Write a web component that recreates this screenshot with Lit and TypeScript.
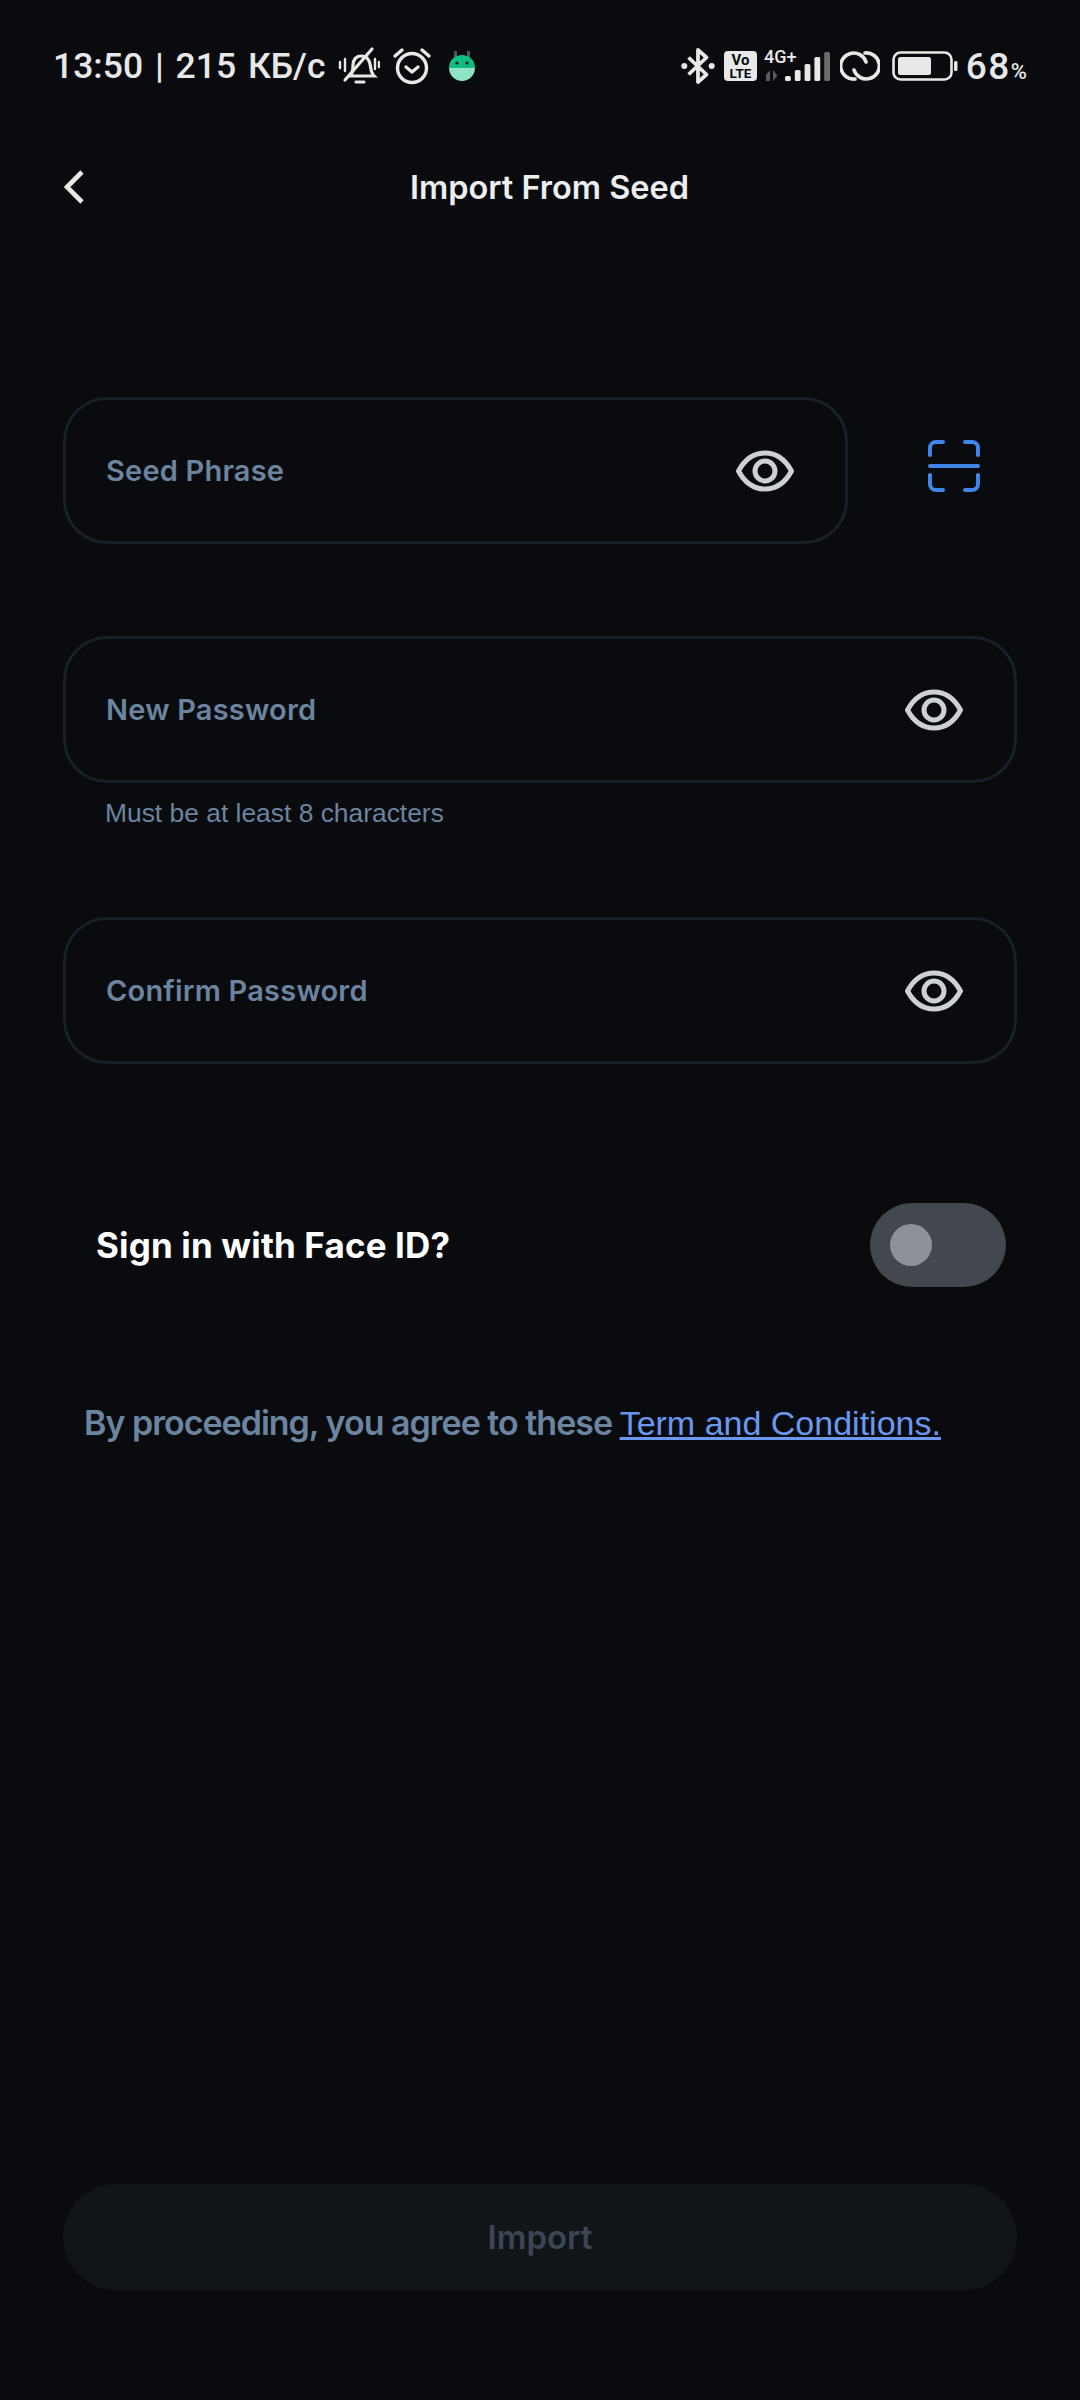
import { LitElement, html, css, svg } from "lit";
import { customElement } from "lit/decorators.js";

const eye = html`<svg class="eye" viewBox="0 0 58 42" fill="none" stroke="#cdd0d4" stroke-width="5">
  <path d="M2.5 21C9 9 18 3 29 3s20 6 26.5 18C49 33 40 39 29 39S9 33 2.5 21Z" stroke-linejoin="round" />
  <circle cx="29" cy="21" r="10" />
</svg>`;

const signalBars = [5, 11, 17, 24, 29].map(
  (h, i) => svg`<rect x=${21 + i * 9.8} y=${34 - h} width="5.8" height=${h} rx="1.6" fill=${i === 4 ? "#6a6c6e" : "#e8e8e8"} />`,
);

@customElement("app-root")
export class AppRoot extends LitElement {
  static styles = css`
    :host {
      display: block;
      width: 1080px;
      height: 2400px;
      background: #090b0e;
      font-family: "Inter", "Liberation Sans", sans-serif;
      overflow: hidden;
    }

    .page {
      display: flex;
      flex-direction: column;
      height: 2400px;
      box-sizing: border-box;
      padding-bottom: 110px;
    }

    .status {
      display: flex;
      align-items: center;
      justify-content: space-between;
      height: 132px;
      padding: 0 53px;
      box-sizing: border-box;
      color: #e8e8e8;
    }

    .status-side {
      display: flex;
      align-items: center;
    }

    .clock {
      font-family: "Roboto", sans-serif;
      font-size: 35.5px;
      font-weight: 500;
      word-spacing: 3px;
      white-space: pre;
      margin-right: 13px;
    }

    .battery-level {
      font-family: "Roboto", sans-serif;
      font-size: 37px;
      font-weight: 500;
      letter-spacing: 1.5px;
      margin-left: 8px;
    }

    .battery-level small {
      font-size: 22px;
      letter-spacing: 0;
    }

    .header {
      position: relative;
      display: flex;
      align-items: center;
      justify-content: center;
      height: 110px;
      padding-left: 19px;
    }

    .back {
      position: absolute;
      left: 62px;
      top: 38px;
    }

    .title {
      font-size: 32.5px;
      font-weight: 600;
      color: #eceef0;
    }

    .form {
      display: flex;
      flex-direction: column;
      padding: 155px 63px 0;
    }

    .row {
      display: flex;
      align-items: center;
    }

    .field {
      flex: 1;
      display: flex;
      align-items: center;
      justify-content: space-between;
      height: 147px;
      box-sizing: border-box;
      padding: 0 51px 0 40px;
      border: 3px solid #1a2027;
      border-radius: 44px;
    }

    .field-label {
      font-size: 29px;
      font-weight: 600;
      letter-spacing: 0.2px;
      color: #6b84a0;
    }

    .eye {
      width: 58px;
      height: 42px;
    }

    .scan {
      width: 56px;
      height: 56px;
      margin: -10px 35px 0 78px;
    }

    .gap-md {
      margin-top: 92px;
    }

    .hint {
      margin: 15px 0 0 42px;
      font-family: "Liberation Sans", sans-serif;
      font-size: 26.4px;
      color: #6b84a0;
    }

    .gap-hint {
      margin-top: 88px;
    }

    .face-row {
      display: flex;
      align-items: center;
      justify-content: space-between;
      margin: 139px 11px 0 33px;
    }

    .face-label {
      font-size: 35px;
      font-weight: 700;
      letter-spacing: 0.15px;
      color: #ffffff;
    }

    .switch {
      display: flex;
      align-items: center;
      width: 136px;
      height: 84px;
      box-sizing: border-box;
      padding-left: 20px;
      border-radius: 42px;
      background: #42484d;
    }

    .knob {
      width: 42px;
      height: 42px;
      border-radius: 50%;
      background: #8d9299;
    }

    .terms {
      margin: 115px 0 0 21px;
      font-size: 34px;
      font-weight: 600;
      letter-spacing: -1px;
      color: #6b84a0;
      white-space: nowrap;
    }

    .terms a {
      font-family: "Liberation Sans", sans-serif;
      font-weight: 400;
      letter-spacing: 0;
      color: #6a98f0;
      text-decoration: underline;
    }

    .submit {
      margin: auto 63px 0;
      height: 106px;
      display: flex;
      align-items: center;
      justify-content: center;
      border-radius: 53px;
      background: #11151a;
      font-size: 33px;
      font-weight: 600;
      color: #3c4654;
    }
  `;

  private renderStatusLeft() {
    return html`<div class="status-side">
      <span class="clock">13:50 | 215 КБ/с</span>
      <svg width="42" height="40" viewBox="0 0 42 40" fill="none" stroke="#e8e8e8" stroke-width="3.2" stroke-linecap="round">
        <path d="M12 30c3-3 3-6 3-11 0-5 3-9 8-9s8 3 9 8c1 5 1 9 4 12H12Z" />
        <path d="M18 36h8" />
        <path d="M34 3 7 34" />
        <path d="M2 16v6M7 13v12M37 13v10M41 16v5" stroke-width="2.4" />
      </svg>
      <svg style="margin-left:12px" width="40" height="38" viewBox="0 0 40 38" fill="none" stroke="#e8e8e8" stroke-width="3.4" stroke-linecap="round" stroke-linejoin="round">
        <circle cx="20" cy="21" r="14.5" />
        <path d="M14 20l6 5 6-5" />
        <path d="M3 9l7-6M37 9l-7-6" />
      </svg>
      <svg style="margin-left:16px" width="28" height="32" viewBox="0 0 28 32">
        <path d="M6 1h3v7H6zM19 1h3v7h-3z" fill="#4b5a55" />
        <path d="M1 18C1 10 7 5 14 5s13 5 13 13Z" fill="#10bc84" />
        <path d="M1 18h26c0 7-6 13-13 13S1 25 1 18Z" fill="#8fe3c6" />
        <circle cx="9" cy="13" r="1.6" fill="#0b1a15" />
        <circle cx="19" cy="13" r="1.6" fill="#0b1a15" />
      </svg>
    </div>`;
  }

  private renderStatusRight() {
    return html`<div class="status-side">
      <svg width="34" height="38" viewBox="0 0 36 38" fill="none" stroke="#e8e8e8" stroke-width="4" stroke-linejoin="round">
        <path d="M8 10l19 18-9 8V2l9 8L8 28" />
        <circle cx="3.5" cy="19" r="3.2" fill="#e8e8e8" stroke="none" />
        <circle cx="32.5" cy="19" r="3.2" fill="#e8e8e8" stroke="none" />
      </svg>
      <svg style="margin-left:9px" width="33" height="30" viewBox="0 0 33 30">
        <rect width="33" height="30" rx="4" fill="#e8e8e8" />
        <text x="16.5" y="14" font-family="Roboto" font-size="15" font-weight="700" text-anchor="middle" fill="#090b0e">Vo</text>
        <text x="16.5" y="27" font-family="Roboto" font-size="13.5" font-weight="700" text-anchor="middle" fill="#090b0e">LTE</text>
      </svg>
      <svg style="margin-left:7px" width="66" height="38" viewBox="0 0 66 38">
        <text x="0" y="16" font-family="Roboto" font-size="18" font-weight="500" fill="#e8e8e8">4G+</text>
        <path d="M2 34v-6l4-5v11zM9 23v11l4-5v-1z" fill="#5a5c5e" />
        ${signalBars}
      </svg>
      <svg style="margin-left:10px" width="40" height="30" viewBox="0 0 40 30" fill="none" stroke="#e8e8e8" stroke-width="3.6" stroke-linecap="round">
        <path d="M15 28A13 13 0 1 1 26 11" />
        <path d="M25 2A13 13 0 1 1 14 19" />
      </svg>
      <svg style="margin-left:12px" width="66" height="30" viewBox="0 0 66 30">
        <rect x="1.5" y="1.5" width="58" height="27" rx="7" fill="none" stroke="#e8e8e8" stroke-width="2.6" />
        <rect x="6" y="6" width="33" height="18" rx="2.5" fill="#e8e8e8" />
        <rect x="62" y="10" width="3.5" height="10" rx="1.5" fill="#e8e8e8" />
      </svg>
      <span class="battery-level">68<small>%</small></span>
    </div>`;
  }

  private renderField(label: string) {
    return html`<div class="field">
      <span class="field-label">${label}</span>
      ${eye}
    </div>`;
  }

  render() {
    return html`
      <div class="page">
        <div class="status">${this.renderStatusLeft()} ${this.renderStatusRight()}</div>
        <div class="header">
          <svg class="back" width="24" height="34" viewBox="0 0 24 34" fill="none" stroke="#e8e8e8" stroke-width="4.6">
            <path d="M20 2 5 17l15 15" />
          </svg>
          <span class="title">Import From Seed</span>
        </div>
        <div class="form">
          <div class="row">
            ${this.renderField("Seed Phrase")}
            <svg class="scan" viewBox="0 0 56 56" fill="none" stroke="#3f86e8" stroke-width="4" stroke-linecap="round">
              <path d="M17 4H10a6 6 0 0 0-6 6v7M39 4h7a6 6 0 0 1 6 6v7M17 52H10a6 6 0 0 1-6-6v-9M39 52h7a6 6 0 0 0 6-6v-9" />
              <path d="M4 28h48" />
            </svg>
          </div>
          <div class="row gap-md">${this.renderField("New Password")}</div>
          <div class="hint">Must be at least 8 characters</div>
          <div class="row gap-hint">${this.renderField("Confirm Password")}</div>
          <div class="face-row">
            <span class="face-label">Sign in with Face ID?</span>
            <div class="switch"><div class="knob"></div></div>
          </div>
          <div class="terms">By proceeding, you agree to these <a>Term and Conditions.</a></div>
        </div>
        <div class="submit">Import</div>
      </div>
    `;
  }
}

declare global {
  interface HTMLElementTagNameMap {
    "app-root": AppRoot;
  }
}
